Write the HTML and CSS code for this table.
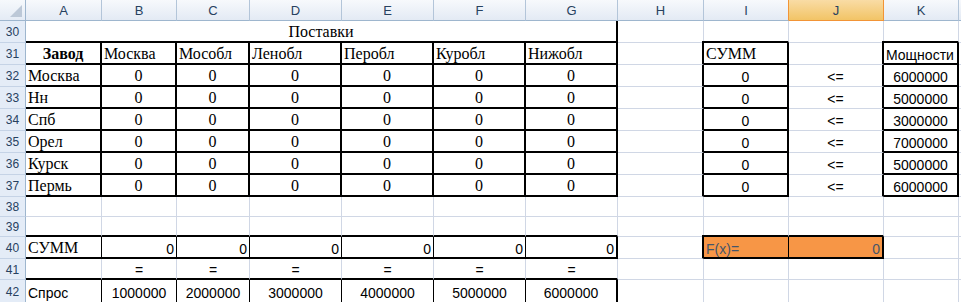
FILE: index.html
```html
<!DOCTYPE html>
<html lang="ru">
<head>
<meta charset="utf-8">
<title>Поставки</title>
<link rel="stylesheet" href="styles.css">
</head>
<body>
<div class="sheet">
  <!-- header -->
  <div class="corner"><svg width="25" height="20" viewBox="0 0 25 20"><polygon points="22,5 22,17 10,17" fill="#bcc8d7"/></svg></div>
  <div class="ch">A</div><div class="ch">B</div><div class="ch">C</div><div class="ch">D</div><div class="ch">E</div><div class="ch">F</div><div class="ch">G</div><div class="ch">H</div><div class="ch presel">I</div><div class="ch sel">J</div><div class="ch">K</div><div class="ch"></div>

  <!-- 30 -->
  <div class="rh">30</div>
  <div class="c s ctr tr tb span7">Поставки</div>
  <div class="c"></div><div class="c tb"></div><div class="c"></div><div class="c tb"></div><div class="c"></div>

  <!-- 31 -->
  <div class="rh">31</div>
  <div class="c s b ctr tr tb">Завод</div>
  <div class="c s tr tb">Москва</div>
  <div class="c s tr tb">Мособл</div>
  <div class="c s tr tb">Ленобл</div>
  <div class="c s tr tb">Перобл</div>
  <div class="c s tr tb">Куробл</div>
  <div class="c s tr tb">Нижобл</div>
  <div class="c tr"></div>
  <div class="c s tr tb box">СУММ</div>
  <div class="c tr"></div>
  <div class="c n tr tb box">Мощности</div>
  <div class="c"></div>

  <!-- 32 -->
  <div class="rh">32</div>
  <div class="c s tr tb">Москва</div>
  <div class="c s ctr tr tb">0</div><div class="c s ctr tr tb">0</div><div class="c s ctr tr tb">0</div><div class="c s ctr tr tb">0</div><div class="c s ctr tr tb">0</div><div class="c s ctr tr tb">0</div>
  <div class="c tr"></div>
  <div class="c n ctr tr tb">0</div>
  <div class="c n ctr tr">&lt;=</div>
  <div class="c n ctr tr tb">6000000</div>
  <div class="c"></div>

  <!-- 33 -->
  <div class="rh">33</div>
  <div class="c s tr tb">Нн</div>
  <div class="c s ctr tr tb">0</div><div class="c s ctr tr tb">0</div><div class="c s ctr tr tb">0</div><div class="c s ctr tr tb">0</div><div class="c s ctr tr tb">0</div><div class="c s ctr tr tb">0</div>
  <div class="c tr"></div>
  <div class="c n ctr tr tb">0</div>
  <div class="c n ctr tr">&lt;=</div>
  <div class="c n ctr tr tb">5000000</div>
  <div class="c"></div>

  <!-- 34 -->
  <div class="rh">34</div>
  <div class="c s tr tb">Спб</div>
  <div class="c s ctr tr tb">0</div><div class="c s ctr tr tb">0</div><div class="c s ctr tr tb">0</div><div class="c s ctr tr tb">0</div><div class="c s ctr tr tb">0</div><div class="c s ctr tr tb">0</div>
  <div class="c tr"></div>
  <div class="c n ctr tr tb">0</div>
  <div class="c n ctr tr">&lt;=</div>
  <div class="c n ctr tr tb">3000000</div>
  <div class="c"></div>

  <!-- 35 -->
  <div class="rh">35</div>
  <div class="c s tr tb">Орел</div>
  <div class="c s ctr tr tb">0</div><div class="c s ctr tr tb">0</div><div class="c s ctr tr tb">0</div><div class="c s ctr tr tb">0</div><div class="c s ctr tr tb">0</div><div class="c s ctr tr tb">0</div>
  <div class="c tr"></div>
  <div class="c n ctr tr tb">0</div>
  <div class="c n ctr tr">&lt;=</div>
  <div class="c n ctr tr tb">7000000</div>
  <div class="c"></div>

  <!-- 36 -->
  <div class="rh">36</div>
  <div class="c s tr tb">Курск</div>
  <div class="c s ctr tr tb">0</div><div class="c s ctr tr tb">0</div><div class="c s ctr tr tb">0</div><div class="c s ctr tr tb">0</div><div class="c s ctr tr tb">0</div><div class="c s ctr tr tb">0</div>
  <div class="c tr"></div>
  <div class="c n ctr tr tb">0</div>
  <div class="c n ctr tr">&lt;=</div>
  <div class="c n ctr tr tb">5000000</div>
  <div class="c"></div>

  <!-- 37 -->
  <div class="rh">37</div>
  <div class="c s tr tb">Пермь</div>
  <div class="c s ctr tr tb">0</div><div class="c s ctr tr tb">0</div><div class="c s ctr tr tb">0</div><div class="c s ctr tr tb">0</div><div class="c s ctr tr tb">0</div><div class="c s ctr tr tb">0</div>
  <div class="c tr"></div>
  <div class="c n ctr tr tb">0</div>
  <div class="c n ctr tr">&lt;=</div>
  <div class="c n ctr tr tb">6000000</div>
  <div class="c"></div>

  <!-- 38 -->
  <div class="rh">38</div>
  <div class="c"></div><div class="c"></div><div class="c"></div><div class="c"></div><div class="c"></div><div class="c"></div><div class="c"></div><div class="c"></div><div class="c"></div><div class="c"></div><div class="c"></div><div class="c"></div>

  <!-- 39 -->
  <div class="rh">39</div>
  <div class="c tb"></div><div class="c tb"></div><div class="c tb"></div><div class="c tb"></div><div class="c tb"></div><div class="c tb"></div><div class="c tb"></div>
  <div class="c"></div><div class="c tb"></div><div class="c tb"></div><div class="c"></div><div class="c"></div>

  <!-- 40 -->
  <div class="rh">40</div>
  <div class="c s br tb">СУММ</div>
  <div class="c n rgt br tb">0</div><div class="c n rgt br tb">0</div><div class="c n rgt br tb">0</div><div class="c n rgt br tb">0</div><div class="c n rgt br tb">0</div>
  <div class="c n rgt tr tb">0</div>
  <div class="c tr"></div>
  <div class="c n org br tb box">F(x)=</div>
  <div class="c n org rgt tr tb">0</div>
  <div class="c"></div><div class="c"></div>

  <!-- 41 -->
  <div class="rh">41</div>
  <div class="c tb"></div>
  <div class="c n ctr tb">=</div><div class="c n ctr tb">=</div><div class="c n ctr tb">=</div><div class="c n ctr tb">=</div><div class="c n ctr tb">=</div><div class="c n ctr tb">=</div>
  <div class="c"></div><div class="c"></div><div class="c"></div><div class="c"></div><div class="c"></div>

  <!-- 42 -->
  <div class="rh">42</div>
  <div class="c n br">Спрос</div>
  <div class="c n ctr br">1000000</div>
  <div class="c n ctr br">2000000</div>
  <div class="c n ctr br">3000000</div>
  <div class="c n ctr br">4000000</div>
  <div class="c n ctr br">5000000</div>
  <div class="c n ctr tr">6000000</div>
  <div class="c"></div><div class="c"></div><div class="c"></div><div class="c"></div><div class="c"></div>
</div>
</body>
</html>
```

FILE: styles.css
```css
html, body {
  margin: 0;
  padding: 0;
  background: #fff;
}

.sheet {
  display: grid;
  grid-template-columns: 26px 76px 75px 73px 92px 92px 92px 92px 86px 85px 95px 75px 1fr;
  grid-template-rows: 21px repeat(8, 22px) 20px 20px 22px 21px 23px;
  width: 961px;
  height: 302px;
  overflow: hidden;
}

.corner {
  box-sizing: border-box;
  background: linear-gradient(#f6f9fc, #e4ebf5);
  border-right: 1px solid #9eb6ce;
  border-bottom: 1px solid #9eb6ce;
}

.corner svg {
  display: block;
}

.ch {
  box-sizing: border-box;
  display: flex;
  align-items: center;
  justify-content: center;
  background: linear-gradient(#f7f9fc, #e3eaf4);
  border-right: 1px solid #b3c5d9;
  border-bottom: 1px solid #9eb6ce;
  font: 13px/1 "Liberation Sans", Arial, sans-serif;
  color: #27415f;
}

.ch.presel {
  border-right-color: #f29436;
}

.ch.sel {
  background: linear-gradient(#f9dca5, #f2c466);
  border-right-color: #f29436;
  border-bottom-color: #f29436;
}

.rh {
  box-sizing: border-box;
  display: flex;
  align-items: center;
  justify-content: center;
  padding-top: 1px;
  background: #e4ecf7;
  border-right: 1px solid #9eb6ce;
  border-bottom: 1px solid #c5d3e6;
  font: 12px/1 "Liberation Sans", Arial, sans-serif;
  color: #27415f;
}

.c {
  box-sizing: border-box;
  display: flex;
  align-items: flex-end;
  padding: 0 2px 1px;
  border-right: 1px solid #d0d7e5;
  border-bottom: 1px solid #d0d7e5;
  white-space: nowrap;
  overflow: hidden;
  color: #000;
}

.s {
  font: 16px/18px "Liberation Serif", "Times New Roman", serif;
}

.n {
  font: 14px/16px "Liberation Sans", Arial, sans-serif;
}

.b {
  font-weight: bold;
}

.ctr {
  justify-content: center;
}

.rgt {
  justify-content: flex-end;
}

.br {
  border-right: 1px solid #000;
}

.tr {
  border-right: 2px solid #000;
}

.tb {
  border-bottom: 2px solid #000;
  padding-bottom: 0;
}

/* fills the top-left corner where a thick box outline meets */
.box {
  box-shadow: -2px -2px 0 #000;
}

.org {
  background: #f79646;
  color: #45556a;
}

.span7 {
  grid-column: span 7;
}
```
